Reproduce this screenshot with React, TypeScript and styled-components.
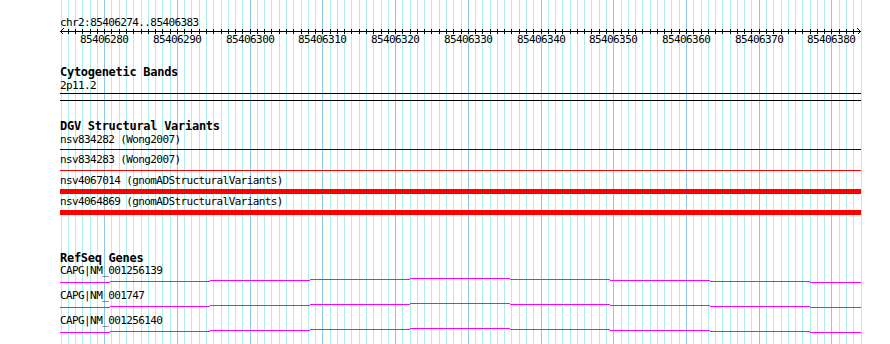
import React from "react";
import styled, { createGlobalStyle } from "styled-components";

const START = 85406274;
const END = 85406383;
const VIEW_LEFT = 60;
const VIEW_WIDTH = 800;
const BP_PX = VIEW_WIDTH / (END - START + 1);

// screen x of the left edge of a base
const bpX = (bp: number) => Math.round(VIEW_LEFT + 0.5 + (bp - START) * BP_PX);

type Variant = {
  name: string;
  color: string;
  thickness: number;
  labelGap: number;
  glyphGap: number;
};

const variants: Variant[] = [
  { name: "nsv834282 (Wong2007)", color: "#0000b0", thickness: 1, labelGap: 1, glyphGap: 3 },
  { name: "nsv834283 (Wong2007)", color: "#ff0000", thickness: 1, labelGap: 4, glyphGap: 4 },
  { name: "nsv4067014 (gnomADStructuralVariants)", color: "#ff0000", thickness: 5, labelGap: 4, glyphGap: 2 },
  { name: "nsv4064869 (gnomADStructuralVariants)", color: "#ff0000", thickness: 5, labelGap: 2, glyphGap: 2 },
];

const genes = ["CAPG|NM_001256139", "CAPG|NM_001747", "CAPG|NM_001256140"];

const GlobalStyle = createGlobalStyle`
  html, body {
    margin: 0;
    padding: 0;
    background: #fff;
  }
  body {
    font-family: "DejaVu Sans Mono", "Liberation Mono", monospace;
    color: #000;
  }
`;

const Page = styled.div`
  position: relative;
  width: 890px;
  height: 344px;
  overflow: hidden;
  background: #fff;
`;

const GridLayer = styled.svg`
  position: absolute;
  left: 0;
  top: 0;
`;

const Content = styled.div`
  position: relative;
  padding: 17px 0 0 ${VIEW_LEFT}px;
  width: 802px;
`;

const Label = styled.div<{ $gap?: number }>`
  margin-top: ${({ $gap }) => $gap ?? 0}px;
  height: 12px;
  font-size: 11px;
  line-height: 12px;
  letter-spacing: -0.6px;
  white-space: nowrap;
`;

const RulerTitle = styled(Label)`
  height: 11px;
`;

const RulerScale = styled.div`
  position: relative;
  height: 18px;

  svg {
    display: block;
  }
`;

const TickLabel = styled.span<{ $left: number }>`
  position: absolute;
  top: 6px;
  left: ${({ $left }) => $left}px;
  width: 48px;
  text-align: center;
  font-size: 11px;
  line-height: 12px;
  letter-spacing: -0.6px;
`;

const TrackTitle = styled.div<{ $gap: number }>`
  margin-top: ${({ $gap }) => $gap}px;
  height: 13px;
  font-size: 12px;
  font-weight: bold;
  line-height: 13px;
  letter-spacing: -0.28px;
  white-space: nowrap;
`;

const BandBox = styled.div`
  margin-top: 1px;
  width: 801px;
  height: 8px;
  box-sizing: border-box;
  border-top: 1px solid #000;
  border-bottom: 1px solid #000;
`;

const VariantBar = styled.div<{ $color: string; $thickness: number; $gap: number }>`
  margin-top: ${({ $gap }) => $gap}px;
  width: 801px;
  height: ${({ $thickness }) => $thickness}px;
  background: ${({ $color }) => $color};
`;

const GeneGlyph = styled.svg`
  display: block;
`;

const Gridlines: React.FC = () => {
  const lines = [];
  for (let bp = START; bp <= END + 1; bp++) {
    lines.push(
      <rect
        key={bp}
        x={bpX(bp)}
        y={0}
        width={1}
        height={344}
        fill={bp % 10 === 0 ? "#8cc6ec" : "#aeeeee"}
      />
    );
  }
  return (
    <GridLayer width={890} height={344} shapeRendering="crispEdges">
      {lines}
    </GridLayer>
  );
};

const Ruler: React.FC = () => {
  const ticks = [];
  for (let bp = START + 1; bp <= END; bp++) {
    const x = bpX(bp) - VIEW_LEFT + 0.5;
    ticks.push(<line key={bp} x1={x} x2={x} y1={1} y2={6} stroke="#000" />);
  }
  const labels = [];
  for (let bp = 85406280; bp <= END; bp += 10) {
    labels.push(
      <TickLabel key={bp} $left={bpX(bp) - VIEW_LEFT - 24}>
        {bp}
      </TickLabel>
    );
  }
  return (
    <>
      <RulerTitle>
        chr2:{START}..{END}
      </RulerTitle>
      <RulerScale>
        <svg width={802} height={8} shapeRendering="crispEdges">
          <line x1={0} x2={801} y1={3.5} y2={3.5} stroke="#000" />
          {ticks}
          <polyline points="3.5,0.5 0.5,3.5 3.5,6.5" fill="none" stroke="#000" />
          <polyline points="797.5,0.5 800.5,3.5 797.5,6.5" fill="none" stroke="#000" />
        </svg>
        {labels}
      </RulerScale>
    </>
  );
};

// intron hat drawn the way a canvas rasterises it: stepped 1px segments
const GeneLine: React.FC = () => {
  const segs = [];
  for (let k = 0; k <= 8; k++) {
    const x0 = Math.max(0, k * 100 - 50);
    const x1 = Math.min(801, k * 100 + 50);
    const row = 5 - Math.min(k, 8 - k);
    segs.push(<rect key={k} x={x0} y={row} width={x1 - x0} height={1} fill="#ff00ff" />);
  }
  return (
    <GeneGlyph width={801} height={13} shapeRendering="crispEdges">
      {segs}
    </GeneGlyph>
  );
};

export default function App() {
  return (
    <>
      <GlobalStyle />
      <Page>
        <Gridlines />
        <Content>
          <Ruler />

          <TrackTitle $gap={20}>Cytogenetic Bands</TrackTitle>
          <Label $gap={1}>2p11.2</Label>
          <BandBox />

          <TrackTitle $gap={19}>DGV Structural Variants</TrackTitle>
          {variants.map((v) => (
            <React.Fragment key={v.name}>
              <Label $gap={v.labelGap}>{v.name}</Label>
              <VariantBar $color={v.color} $thickness={v.thickness} $gap={v.glyphGap} />
            </React.Fragment>
          ))}

          <TrackTitle $gap={37}>RefSeq Genes</TrackTitle>
          {genes.map((g) => (
            <React.Fragment key={g}>
              <Label>{g}</Label>
              <GeneLine />
            </React.Fragment>
          ))}
        </Content>
      </Page>
    </>
  );
}
